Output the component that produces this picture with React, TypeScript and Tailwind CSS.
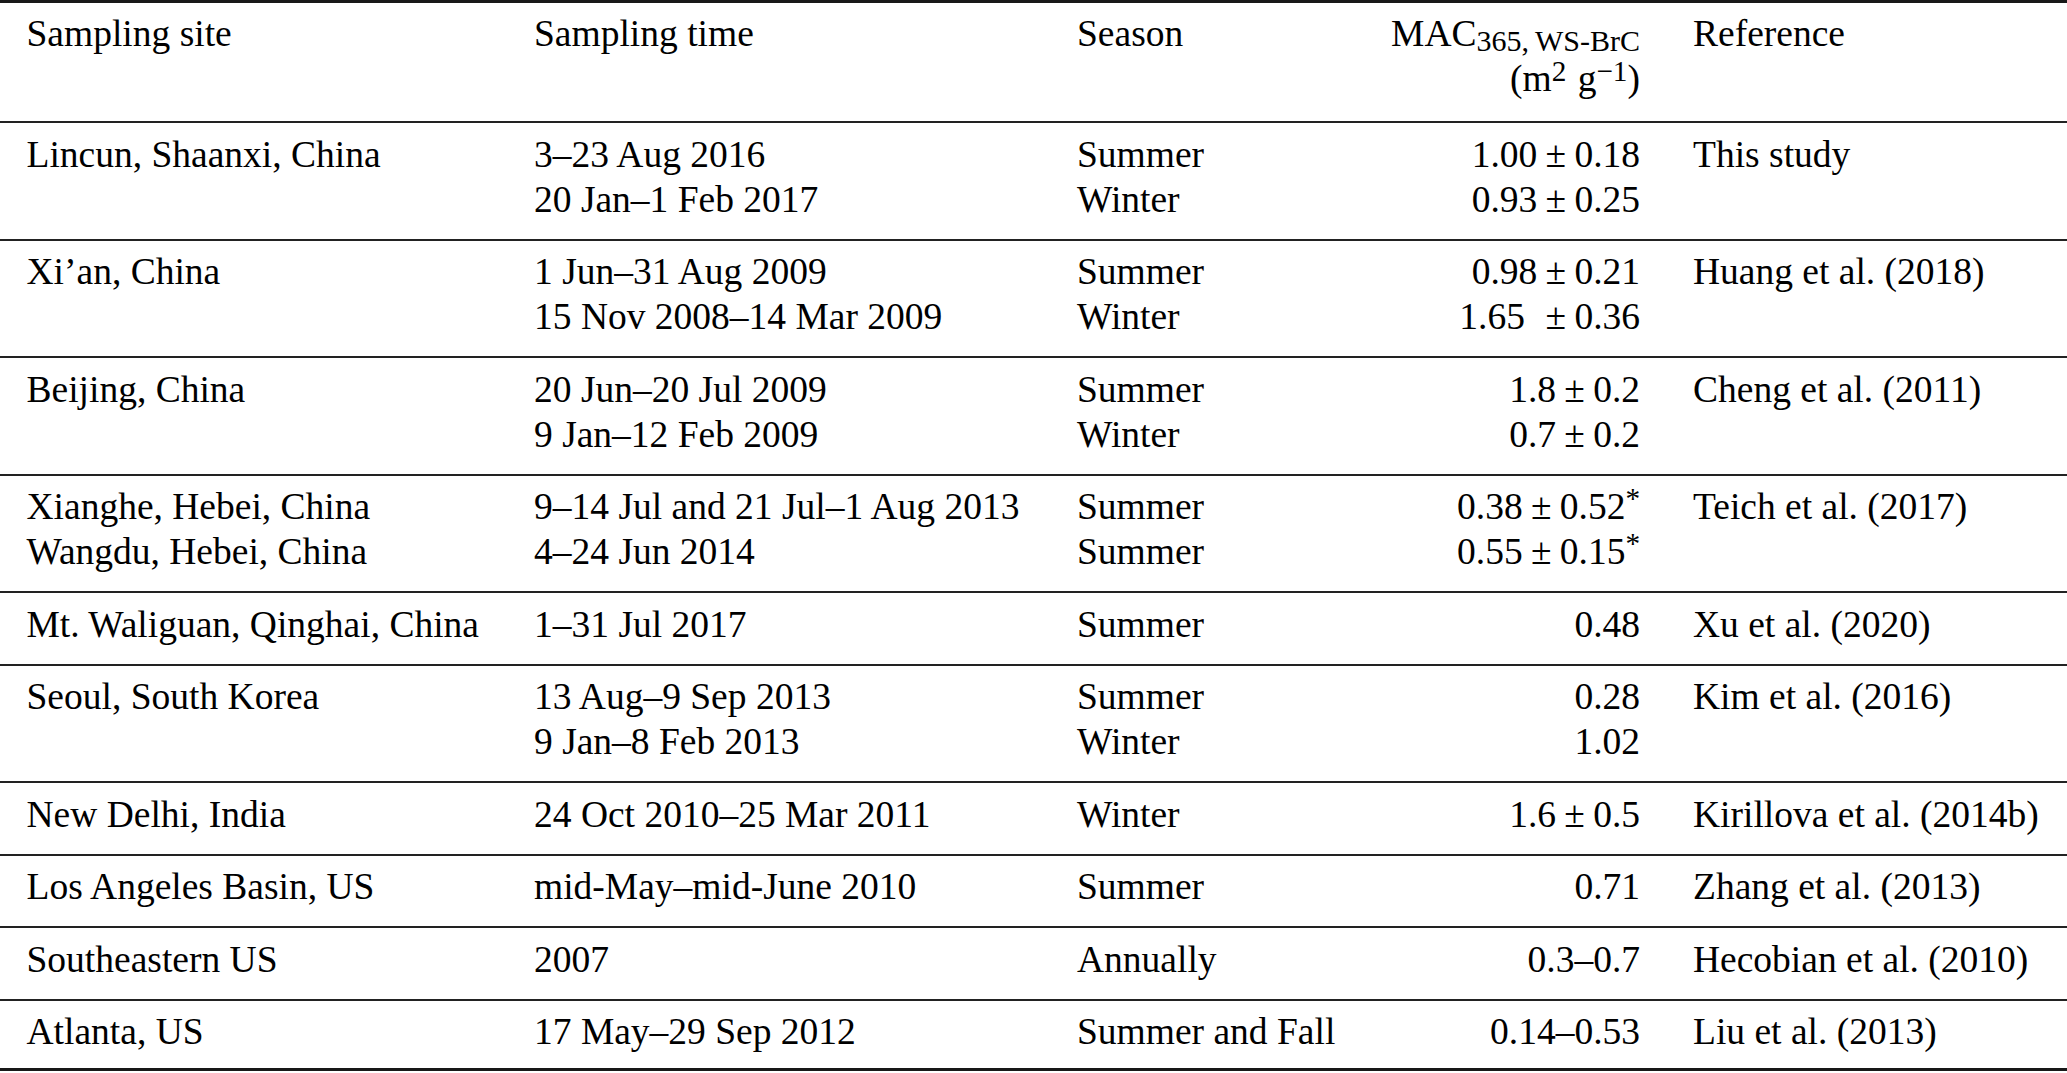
type Row = {
  site: string[];
  time: string[];
  season: string[];
  mac: React.ReactNode[];
  reference: string;
};

function Pm({ a, b, star = false, gap = false }: { a: string; b: string; star?: boolean; gap?: boolean }) {
  return (
    <span className="whitespace-nowrap">
      {a}
      <span className={gap ? 'ml-[0.55em] mr-[0.22em]' : 'mx-[0.22em]'}>±</span>
      {b}
      {star && <span className="relative -top-[0.38em] text-[0.78em] leading-none">*</span>}
    </span>
  );
}

const rows: Row[] = [
  {
    site: ['Lincun, Shaanxi, China'],
    time: ['3–23 Aug 2016', '20 Jan–1 Feb 2017'],
    season: ['Summer', 'Winter'],
    mac: [<Pm a="1.00" b="0.18" />, <Pm a="0.93" b="0.25" />],
    reference: 'This study',
  },
  {
    site: ['Xi’an, China'],
    time: ['1 Jun–31 Aug 2009', '15 Nov 2008–14 Mar 2009'],
    season: ['Summer', 'Winter'],
    mac: [<Pm a="0.98" b="0.21" />, <Pm a="1.65" b="0.36" gap />],
    reference: 'Huang et al. (2018)',
  },
  {
    site: ['Beijing, China'],
    time: ['20 Jun–20 Jul 2009', '9 Jan–12 Feb 2009'],
    season: ['Summer', 'Winter'],
    mac: [<Pm a="1.8" b="0.2" />, <Pm a="0.7" b="0.2" />],
    reference: 'Cheng et al. (2011)',
  },
  {
    site: ['Xianghe, Hebei, China', 'Wangdu, Hebei, China'],
    time: ['9–14 Jul and 21 Jul–1 Aug 2013', '4–24 Jun 2014'],
    season: ['Summer', 'Summer'],
    mac: [<Pm a="0.38" b="0.52" star />, <Pm a="0.55" b="0.15" star />],
    reference: 'Teich et al. (2017)',
  },
  {
    site: ['Mt. Waliguan, Qinghai, China'],
    time: ['1–31 Jul 2017'],
    season: ['Summer'],
    mac: ['0.48'],
    reference: 'Xu et al. (2020)',
  },
  {
    site: ['Seoul, South Korea'],
    time: ['13 Aug–9 Sep 2013', '9 Jan–8 Feb 2013'],
    season: ['Summer', 'Winter'],
    mac: ['0.28', '1.02'],
    reference: 'Kim et al. (2016)',
  },
  {
    site: ['New Delhi, India'],
    time: ['24 Oct 2010–25 Mar 2011'],
    season: ['Winter'],
    mac: [<Pm a="1.6" b="0.5" />],
    reference: 'Kirillova et al. (2014b)',
  },
  {
    site: ['Los Angeles Basin, US'],
    time: ['mid-May–mid-June 2010'],
    season: ['Summer'],
    mac: ['0.71'],
    reference: 'Zhang et al. (2013)',
  },
  {
    site: ['Southeastern US'],
    time: ['2007'],
    season: ['Annually'],
    mac: ['0.3–0.7'],
    reference: 'Hecobian et al. (2010)',
  },
  {
    site: ['Atlanta, US'],
    time: ['17 May–29 Sep 2012'],
    season: ['Summer and Fall'],
    mac: ['0.14–0.53'],
    reference: 'Liu et al. (2013)',
  },
];

const grid = 'grid grid-cols-[507.5px_543px_350px_266px_1fr]';
const cell = 'px-[26.5px] flex flex-col';

export default function App() {
  return (
    <div className="min-h-screen w-[2067px] bg-white text-black font-['Liberation_Serif','Times_New_Roman',serif] text-[37.5px] leading-[45px]">
      <div className="border-t-[3px] border-b-[3px] border-[#181818]">
        {/* header */}
        <div className={`${grid} pt-[8px] pb-[20px] border-b-2 border-[#222]`}>
          <div className={cell}>Sampling site</div>
          <div className={cell}>Sampling time</div>
          <div className={cell}>Season</div>
          <div className={`${cell} items-end text-right`}>
            <span className="whitespace-nowrap">
              MAC
              <span className="relative top-[0.15em] text-[0.8em] leading-none">365,&thinsp;WS-BrC</span>
            </span>
            <span className="whitespace-nowrap">
              (m<span className="relative -top-[0.34em] text-[0.78em] leading-none">2</span>
              <span className="ml-[0.3em]">g</span>
              <span className="relative -top-[0.34em] text-[0.78em] leading-none">−1</span>)
            </span>
          </div>
          <div className={cell}>Reference</div>
        </div>

        {rows.map((r, i) => {
          const last = i === rows.length - 1;
          return (
            <div
              key={r.reference}
              className={`${grid} pt-[8.5px] ${last ? 'pb-[14px]' : 'pb-[17px] border-b-2 border-[#222]'}`}
            >
              <div className={cell}>
                {r.site.map((s) => (
                  <span key={s} className="whitespace-nowrap">{s}</span>
                ))}
              </div>
              <div className={cell}>
                {r.time.map((t) => (
                  <span key={t} className="whitespace-nowrap">{t}</span>
                ))}
              </div>
              <div className={cell}>
                {r.season.map((s, j) => (
                  <span key={j}>{s}</span>
                ))}
              </div>
              <div className={`${cell} items-end text-right`}>
                {r.mac.map((m, j) => (
                  <span key={j}>{m}</span>
                ))}
              </div>
              <div className={cell}>
                <span className="whitespace-nowrap">{r.reference}</span>
              </div>
            </div>
          );
        })}
      </div>
    </div>
  );
}
